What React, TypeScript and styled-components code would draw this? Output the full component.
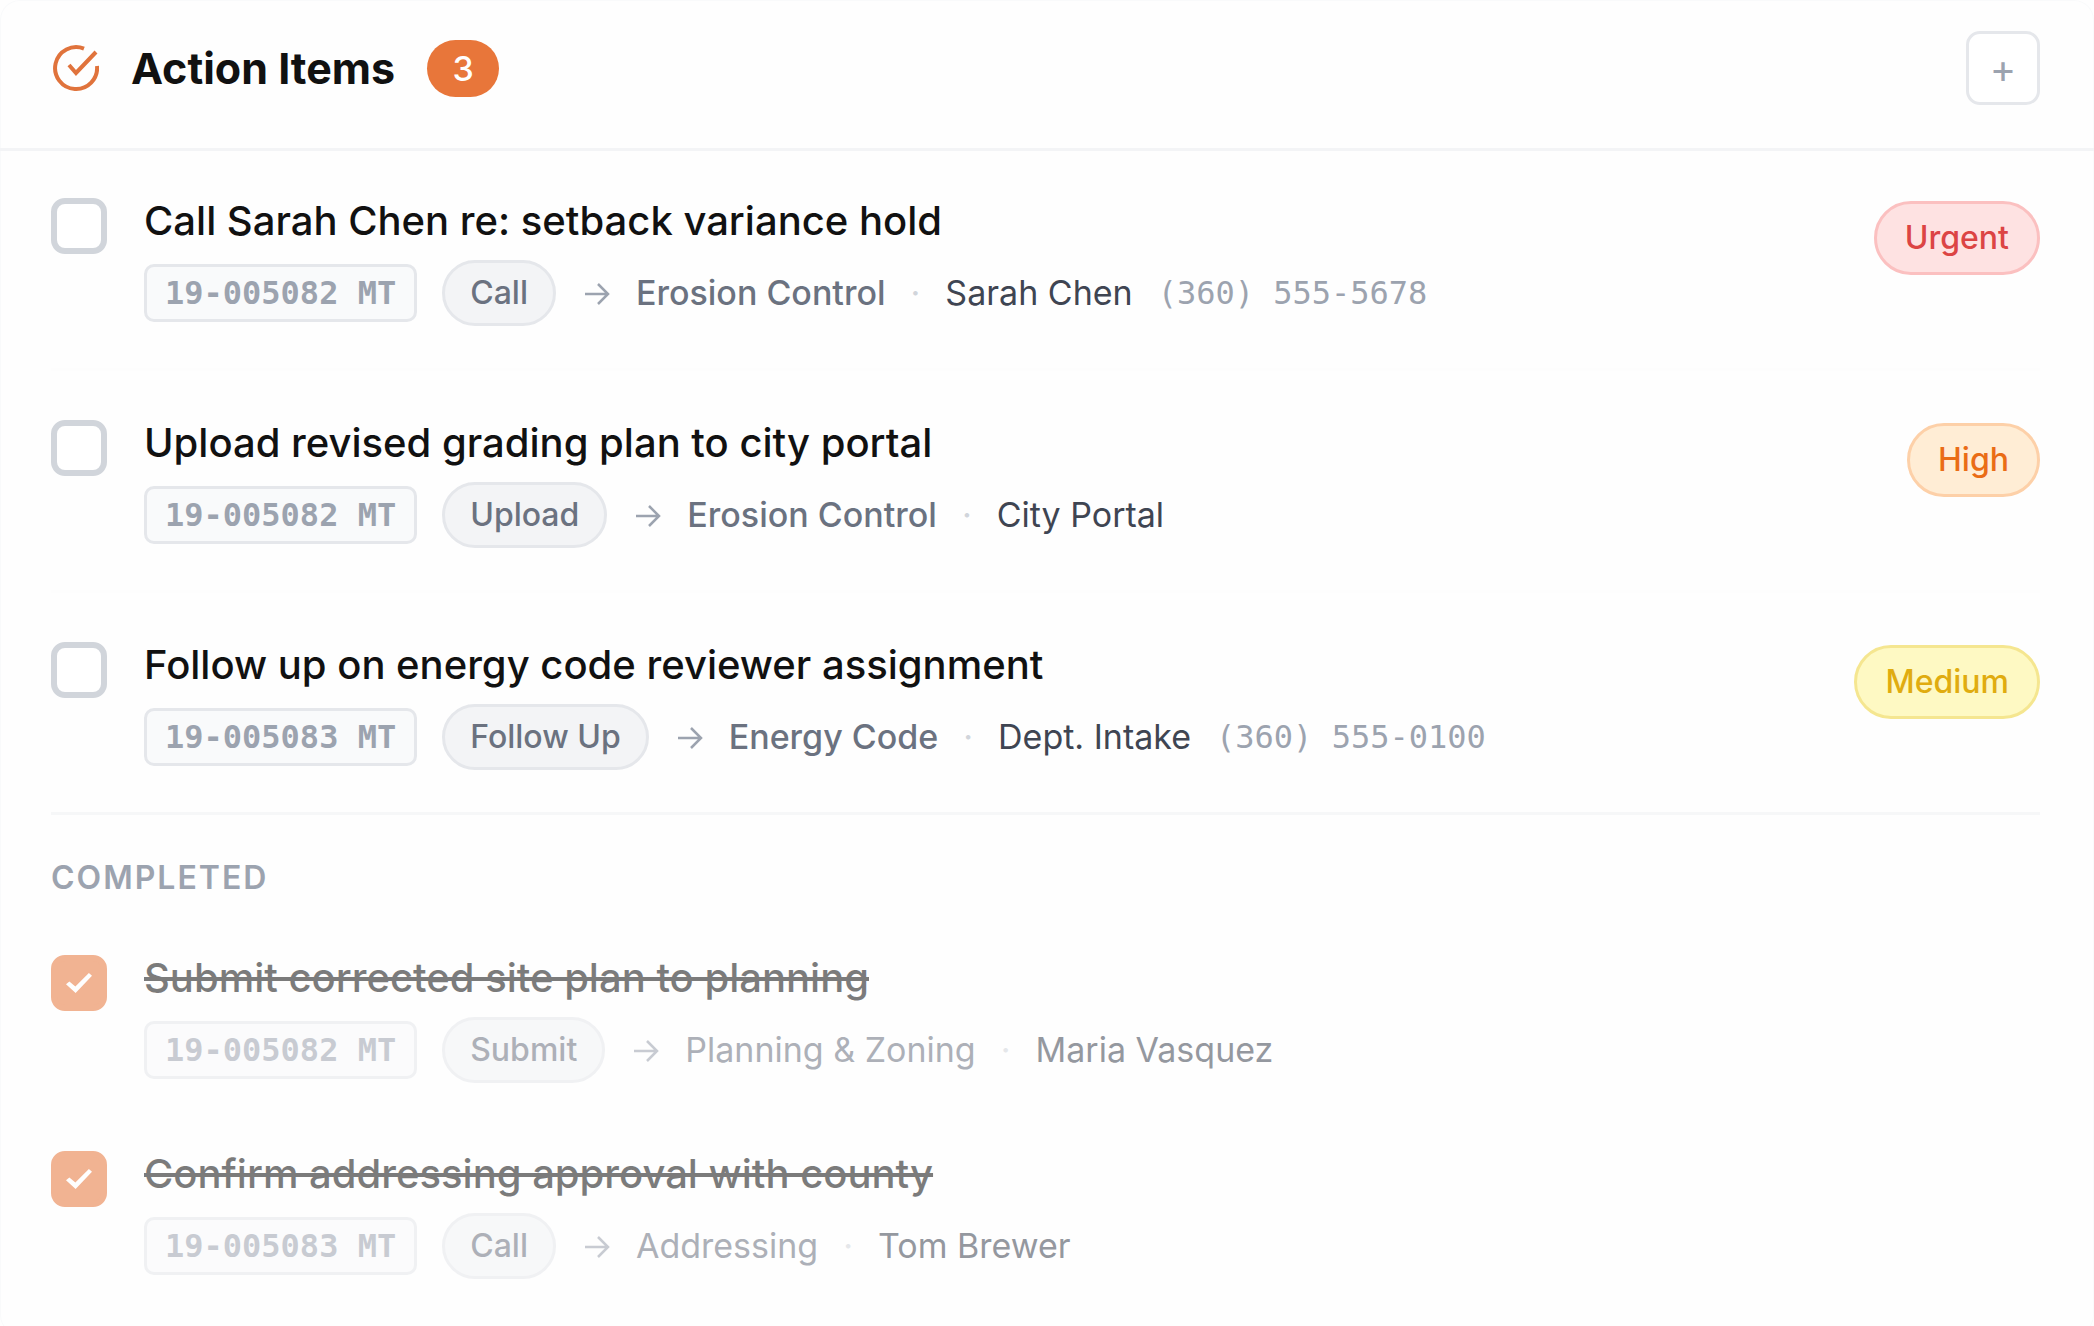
import React, { useState } from "react";
import styled, { createGlobalStyle } from "styled-components";

const sans = `Inter, "Liberation Sans", sans-serif`;
const mono = `"DejaVu Sans Mono", "Liberation Mono", monospace`;

const GlobalStyle = createGlobalStyle`
  *, *::before, *::after { box-sizing: border-box; }
  body { margin: 0; background: #fefefe; font-family: ${sans}; color: #111; }
`;

const Panel = styled.section`
  min-height: 100vh;
  border-radius: 20px;
  background: #fefefe;
  box-shadow: inset 0 0 0 1px #f9fafb;
`;

const Header = styled.header`
  display: flex;
  align-items: center;
  gap: 32px;
  padding: 31px 54px 43px 51px;
  border-bottom: 3px solid #f3f4f6;
`;

const HeaderIcon = styled.svg`
  width: 48px;
  height: 48px;
  flex: none;
`;

const Heading = styled.h2`
  margin: 0;
  font-size: 43px;
  line-height: 56px;
  font-weight: 700;
`;

const Count = styled.span`
  display: inline-flex;
  align-items: center;
  justify-content: center;
  min-width: 72px;
  height: 57px;
  border-radius: 29px;
  background: #e8763a;
  color: #fff;
  font-size: 34px;
  font-weight: 500;
`;

const AddButton = styled.button`
  display: flex;
  align-items: center;
  justify-content: center;
  width: 74px;
  height: 74px;
  margin-left: auto;
  padding: 0;
  border: 3px solid #e5e7eb;
  border-radius: 14px;
  background: #fff;
  color: #9ca3af;
  font-family: ${sans};
  font-size: 40px;
  font-weight: 400;
`;

const Content = styled.div`
  padding: 0 54px 24px 51px;
`;

const List = styled.ul`
  margin: 0;
  padding: 0;
  list-style: none;
`;

const Item = styled.li<{ $done: boolean }>`
  display: flex;
  align-items: flex-start;
  gap: 37px;
  padding: ${(p) => (p.$done ? "33px 0 32px" : "44px 0 42px")};
  opacity: ${(p) => (p.$done ? 0.55 : 1)};
  &:not(:first-child) {
    padding-top: ${(p) => (p.$done ? "33px" : "46px")};
    border-top: ${(p) => (p.$done ? "0" : "3px solid #fdfdfd")};
  }
`;

const Check = styled.input`
  appearance: none;
  display: grid;
  place-content: center;
  flex: none;
  width: 56px;
  height: 56px;
  margin: 3px 0 0;
  border: 6px solid #d1d5db;
  border-radius: 14px;
  background: #fff;
  &:checked {
    border-color: #e8763a;
    background: #e8763a;
  }
  &:checked::before {
    content: "";
    width: 26px;
    height: 20px;
    background: #fff;
    clip-path: polygon(13% 42%, 36% 68%, 88% 0, 100% 14%, 37% 100%, 0 56%);
  }
`;

const Details = styled.div`
  flex: 1;
  min-width: 0;
`;

const Title = styled.label<{ $done: boolean }>`
  display: block;
  font-size: 40px;
  line-height: 52px;
  font-weight: 500;
  text-decoration: ${(p) => (p.$done ? "line-through" : "none")};
`;

const Meta = styled.div`
  display: flex;
  align-items: center;
  flex-wrap: wrap;
  gap: 25px;
  margin-top: 13px;
  font-size: 34px;
  line-height: 40px;
`;

const Permit = styled.span`
  padding: 6px 18px;
  border: 3px solid #e5e7eb;
  border-radius: 10px;
  background: #f9fafb;
  color: #9ca3af;
  font-family: ${mono};
  font-size: 32px;
  font-weight: 700;
`;

const Kind = styled.span`
  padding: 10px 25px;
  border: 3px solid #e5e7eb;
  border-radius: 33px;
  background: #f3f4f6;
  color: #6b7280;
  font-size: 32px;
  font-weight: 500;
`;

const Arrow = styled.svg`
  width: 30px;
  height: 32px;
  flex: none;
  color: #9ca3af;
`;

const Department = styled.span<{ $done: boolean }>`
  color: #6b7280;
  font-weight: ${(p) => (p.$done ? 400 : 500)};
`;

const Dot = styled.span`
  color: #d1d5db;
`;

const Contact = styled.span`
  color: #3f4552;
`;

const Phone = styled.span`
  color: #9ca3af;
  font-family: ${mono};
  font-size: 32px;
`;

const tones = {
  Urgent: { ink: "#dc4444", fill: "#fee2e2", line: "#fbc0c0" },
  High: { ink: "#ea6c15", fill: "#ffedd5", line: "#fdd0a8" },
  Medium: { ink: "#e0ac10", fill: "#fef9c3", line: "#f5e690" },
};

const Priority = styled.span<{ $tone: keyof typeof tones }>`
  flex: none;
  margin-top: 6px;
  padding: 14px 28px;
  border: 3px solid ${(p) => tones[p.$tone].line};
  border-radius: 37px;
  background: ${(p) => tones[p.$tone].fill};
  color: ${(p) => tones[p.$tone].ink};
  font-size: 32px;
  line-height: 40px;
  font-weight: 500;
`;

const SectionTitle = styled.h3`
  margin: 0;
  padding: 43px 0 21px;
  border-top: 3px solid #f6f7f8;
  color: #9ca3af;
  font-size: 32px;
  line-height: 40px;
  font-weight: 600;
  letter-spacing: 2px;
  text-transform: uppercase;
`;

type Action = {
  id: string;
  title: string;
  permit: string;
  kind: string;
  department: string;
  contact: string;
  phone?: string;
  priority?: keyof typeof tones;
};

const open: Action[] = [
  { id: "a1", title: "Call Sarah Chen re: setback variance hold", permit: "19-005082 MT", kind: "Call", department: "Erosion Control", contact: "Sarah Chen", phone: "(360) 555-5678", priority: "Urgent" },
  { id: "a2", title: "Upload revised grading plan to city portal", permit: "19-005082 MT", kind: "Upload", department: "Erosion Control", contact: "City Portal", priority: "High" },
  { id: "a3", title: "Follow up on energy code reviewer assignment", permit: "19-005083 MT", kind: "Follow Up", department: "Energy Code", contact: "Dept. Intake", phone: "(360) 555-0100", priority: "Medium" },
];

const completed: Action[] = [
  { id: "c1", title: "Submit corrected site plan to planning", permit: "19-005082 MT", kind: "Submit", department: "Planning & Zoning", contact: "Maria Vasquez" },
  { id: "c2", title: "Confirm addressing approval with county", permit: "19-005083 MT", kind: "Call", department: "Addressing", contact: "Tom Brewer" },
];

function ActionRow({ action, done = false }: { action: Action; done?: boolean }) {
  const [checked, setChecked] = useState(done);
  return (
    <Item $done={done}>
      <Check type="checkbox" id={action.id} checked={checked} onChange={(e) => setChecked(e.target.checked)} />
      <Details>
        <Title htmlFor={action.id} $done={done}>{action.title}</Title>
        <Meta>
          <Permit>{action.permit}</Permit>
          <Kind>{action.kind}</Kind>
          <Arrow viewBox="0 0 30 32" fill="none" stroke="currentColor" strokeWidth="2.5" aria-hidden="true">
            <path d="M4 17h22M17 7l10 10-10 10" />
          </Arrow>
          <Department $done={done}>{action.department}</Department>
          <Dot>·</Dot>
          <Contact>{action.contact}</Contact>
          {action.phone && <Phone>{action.phone}</Phone>}
        </Meta>
      </Details>
      {action.priority && <Priority $tone={action.priority}>{action.priority}</Priority>}
    </Item>
  );
}

export default function App() {
  return (
    <Panel>
      <GlobalStyle />
      <Header>
        <HeaderIcon viewBox="0 0 48 48" fill="none" stroke="#e0733c" strokeWidth="4" aria-hidden="true">
          <path d="M33 4.600A21 21 0 1 0 46 22" />
          <path d="M18 21l7 8L45 8" />
        </HeaderIcon>
        <Heading>Action Items</Heading>
        <Count>3</Count>
        <AddButton type="button" aria-label="Add action item">+</AddButton>
      </Header>
      <Content>
        <List>
          {open.map((a) => <ActionRow key={a.id} action={a} />)}
        </List>
        <SectionTitle>Completed</SectionTitle>
        <List>
          {completed.map((a) => <ActionRow key={a.id} action={a} done />)}
        </List>
      </Content>
    </Panel>
  );
}
